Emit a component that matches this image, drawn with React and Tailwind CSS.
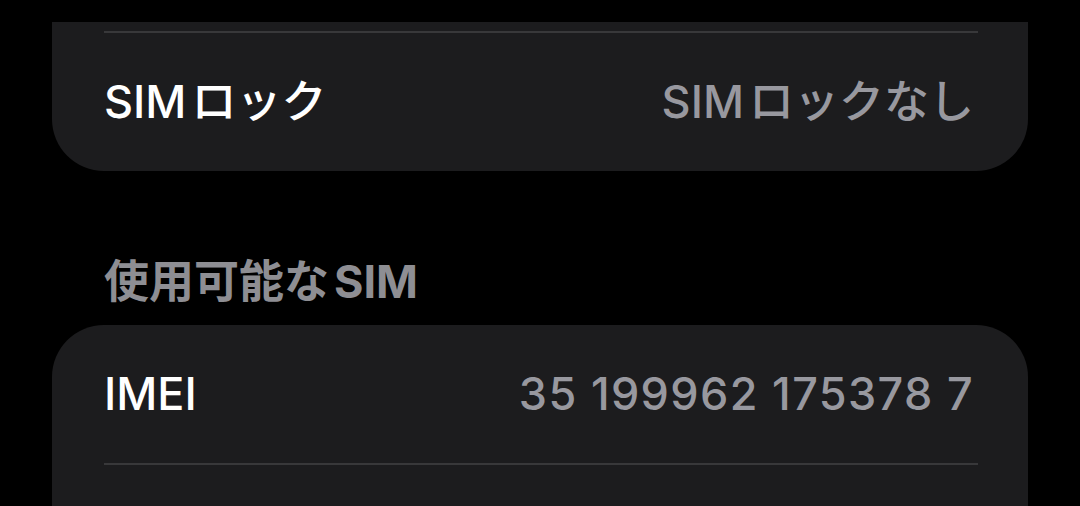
const font = { fontFamily: '"Inter", "Noto Sans CJK JP", sans-serif' };

// iOS leaves a little air between latin and kana, so split the latin part out
const Mixed = ({ latin, rest, before = false }) =>
  before ? (
    <>
      {rest}
      <span className="ml-[5px]">{latin}</span>
    </>
  ) : (
    <>
      <span className="mr-[5px]">{latin}</span>
      {rest}
    </>
  );

const Row = ({ label, value, valueClass = '' }) => (
  <div className="flex h-[138px] items-center justify-between pl-[52px] pr-[54px]">
    <span className="text-[45px] font-medium text-white">{label}</span>
    <span className={`text-[45px] font-medium text-[#98989f] ${valueClass}`}>{value}</span>
  </div>
);

const Divider = () => <div className="ml-[52px] mr-[50px] h-[2px] bg-[#38383a]" />;

const App = () => {
  return (
    <div className="h-[506px] overflow-hidden bg-black px-[52px] pt-[22px]" style={font}>
      <div className="rounded-b-[52px] bg-[#1c1c1e] pt-[9px]">
        <Divider />
        <Row
          label={<Mixed latin="SIM" rest="ロック" />}
          value={<Mixed latin="SIM" rest="ロックなし" />}
        />
      </div>

      <div className="flex h-[154px] items-end pb-[16px] pl-[52px]">
        <h2 className="text-[45px] font-bold leading-[1.2] text-[#8e8e93]">
          <Mixed latin="SIM" rest="使用可能な" before />
        </h2>
      </div>

      <div className="h-[200px] rounded-t-[52px] bg-[#1c1c1e]">
        <Row label="IMEI" value="35 199962 175378 7" valueClass="tracking-[0.03em]" />
        <Divider />
      </div>
    </div>
  );
};

export default App;
